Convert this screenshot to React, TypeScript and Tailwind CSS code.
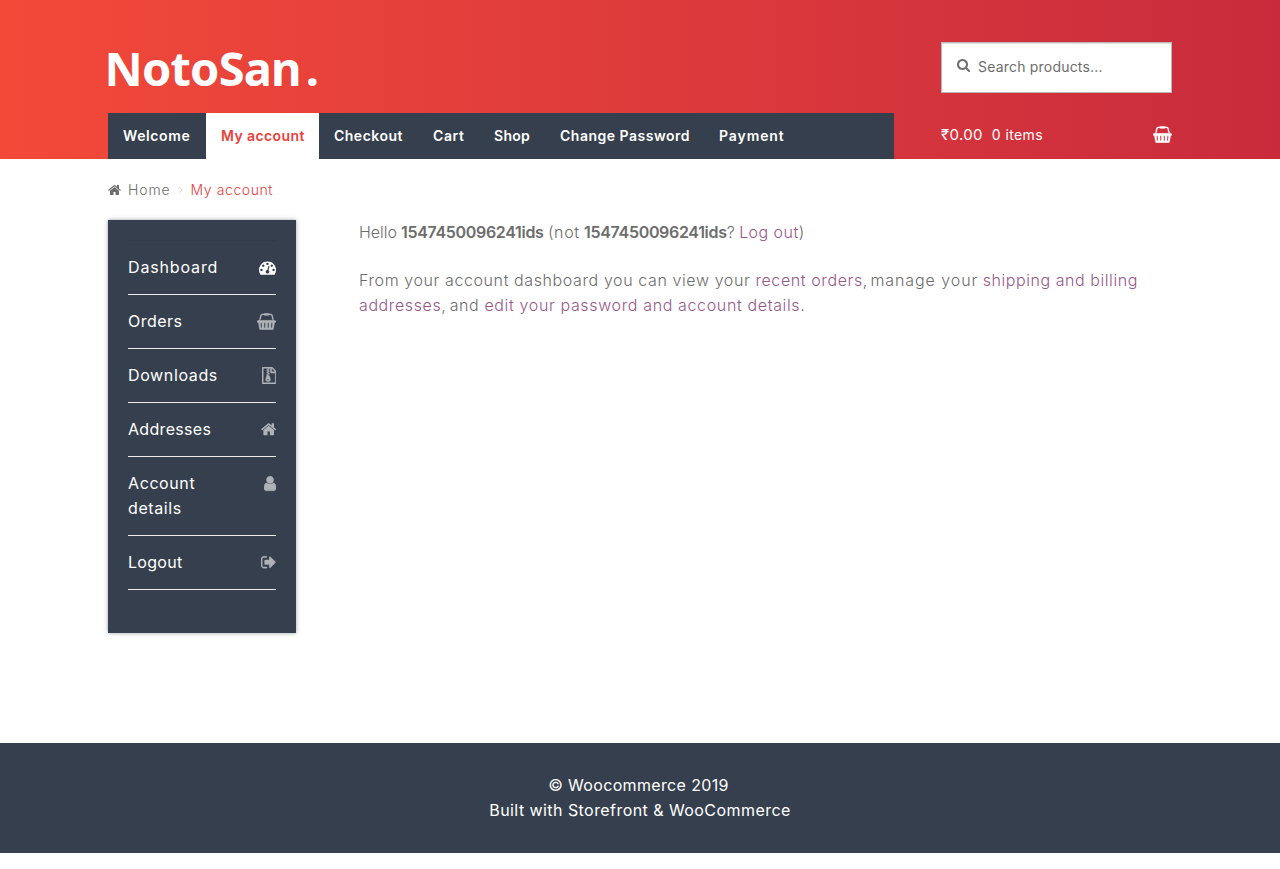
type IconProps = { d: string; viewBox: string; className: string; strokeWidth?: number };

const Icon = ({ d, viewBox, className, strokeWidth = 0 }: IconProps) => (
  <svg
    viewBox={viewBox}
    className={className}
    fill="currentColor"
    stroke="currentColor"
    strokeWidth={strokeWidth}
    aria-hidden="true"
  >
    <path d={d} />
  </svg>
);

const icons = {
  home: {
    viewBox: "64 0 1664 1792",
    d: "M1472 992v480q0 26-19 45t-45 19h-384v-384h-256v384h-384q-26 0-45-19t-19-45v-480q0-1 .5-3t.5-3l575-474 575 474q1 2 1 6zm223-69l-62 74q-8 9-21 11h-3q-13 0-21-7l-692-577-692 577q-12 8-24 7-13-2-21-11l-62-74q-8-10-7-23.5t11-21.5l719-599q32-26 76-26t76 26l244 204v-195q0-14 9-23t23-9h192q14 0 23 9t9 23v408l219 182q10 8 11 21.5t-7 23.5z",
  },
  search: {
    viewBox: "64 0 1664 1792",
    d: "M1216 832q0-185-131.5-316.5t-316.5-131.5-316.5 131.5-131.5 316.5 131.5 316.5 316.5 131.5 316.5-131.5 131.5-316.5zm512 832q0 52-38 90t-90 38q-54 0-90-38l-343-342q-179 124-399 124-143 0-273.5-55.5t-225-150-150-225-55.5-273.5 55.5-273.5 150-225 225-150 273.5-55.5 273.5 55.5 225 150 150 225 55.5 273.5q0 220-124 399l343 343q37 37 37 90z",
  },
  basket: {
    viewBox: "0 0 2048 1792",
    d: "M1920 768q53 0 90.5 37.5t37.5 90.5-37.5 90.5-90.5 37.5h-15l-115 662q-8 46-44 76t-82 30h-1280q-46 0-82-30t-44-76l-115-662h-15q-53 0-90.5-37.5t-37.5-90.5 37.5-90.5 90.5-37.5h1792zm-1435 800q26-2 43.5-22.5t15.5-46.5l-32-416q-2-26-22.5-43.5t-46.5-15.5-43.5 22.5-15.5 46.5l32 416q2 25 20.5 42t43.5 17h5zm411-64v-416q0-26-19-45t-45-19-45 19-19 45v416q0 26 19 45t45 19 45-19 19-45zm384 0v-416q0-26-19-45t-45-19-45 19-19 45v416q0 26 19 45t45 19 45-19 19-45zm352 5l32-416q2-26-15.5-46.5t-43.5-22.5-46.5 15.5-22.5 43.5l-32 416q-2 26 15.5 46.5t43.5 22.5h5q25 0 43.5-17t20.5-42zm-1156-1217l-93 412h-132l101-441q19-88 89-143.5t160-55.5h167q0-26 19-45t45-19h384q26 0 45 19t19 45h167q90 0 160 55.5t89 143.5l101 441h-132l-93-412q-11-44-45.5-72t-79.5-28h-167q0 26-19 45t-45 19h-384q-26 0-45-19t-19-45h-167q-45 0-79.5 28t-45.5 72z",
    strokeWidth: 24,
  },
  gauge: {
    viewBox: "0 0 1792 1792",
    d: "M384 1152q0-53-37.5-90.5t-90.5-37.5-90.5 37.5-37.5 90.5 37.5 90.5 90.5 37.5 90.5-37.5 37.5-90.5zm192-448q0-53-37.5-90.5t-90.5-37.5-90.5 37.5-37.5 90.5 37.5 90.5 90.5 37.5 90.5-37.5 37.5-90.5zm428 481l101-382q6-26-7.5-48.5t-38.5-29.5-48 6.5-30 39.5l-101 382q-60 5-107 43.5t-63 98.5q-20 77 20 146t117 89 146-20 89-117q16-60-6-117t-72-91zm660-33q0-53-37.5-90.5t-90.5-37.5-90.5 37.5-37.5 90.5 37.5 90.5 90.5 37.5 90.5-37.5 37.5-90.5zm-640-640q0-53-37.5-90.5t-90.5-37.5-90.5 37.5-37.5 90.5 37.5 90.5 90.5 37.5 90.5-37.5 37.5-90.5zm448 192q0-53-37.5-90.5t-90.5-37.5-90.5 37.5-37.5 90.5 37.5 90.5 90.5 37.5 90.5-37.5 37.5-90.5zm320 448q0 261-141 483-19 29-54 29h-1402q-35 0-54-29-141-221-141-483 0-182 71-348t191-286 286-191 348-71 348 71 286 191 191 286 71 348z",
  },
  archive: {
    viewBox: "128 0 1536 1792",
    d: "M768 384v-128h-128v128h128zm128 128v-128h-128v128h128zm-128 128v-128h-128v128h128zm128 128v-128h-128v128h128zm700-388q28 28 48 76t20 88v1152q0 40-28 68t-68 28h-1344q-40 0-68-28t-28-68v-1600q0-40 28-68t68-28h896q40 0 88 20t76 48zm-444-244v376h376q-10-29-22-41l-313-313q-12-12-41-22zm384 1528v-1024h-416q-40 0-68-28t-28-68v-416h-128v128h-128v-128h-512v1536h1280zm-627-721l107 349q8 27 8 52 0 83-72.5 137.5t-183.5 54.5-183.5-54.5-72.5-137.5q0-25 8-52 21-63 120-396v-128h128v128h79q22 0 39 13t23 34zm-141 465q53 0 90.5-19t37.5-45-37.5-45-90.5-19-90.5 19-37.5 45 37.5 45 90.5 19z",
    strokeWidth: 50,
  },
  user: {
    viewBox: "256 0 1280 1792",
    d: "M1536 1399q0 109-62.5 187t-150.5 78h-854q-88 0-150.5-78t-62.5-187q0-85 8.5-160.5t31.5-152 58.5-131 94-89 134.5-34.5q131 128 313 128t313-128q76 0 134.5 34.5t94 89 58.5 131 31.5 152 8.5 160.5zm-256-887q0 159-112.5 271.5t-271.5 112.5-271.5-112.5-112.5-271.5 112.5-271.5 271.5-112.5 271.5 112.5 112.5 271.5z",
    strokeWidth: 40,
  },
  signOut: {
    viewBox: "64 0 1664 1792",
    d: "M704 1440q0 4 1 20t.5 26.5-3 23.5-10 19.5-20.5 6.5h-320q-119 0-203.5-84.5t-84.5-203.5v-704q0-119 84.5-203.5t203.5-84.5h320q13 0 22.5 9.5t9.5 22.5q0 4 1 20t.5 26.5-3 23.5-10 19.5-20.5 6.5h-320q-66 0-113 47t-47 113v704q0 66 47 113t113 47h312l11.5 1 11.5 3 8 5.5 7 9 2 13.5zm928-544q0 26-19 45l-544 544q-19 19-45 19t-45-19-19-45v-288h-448q-26 0-45-19t-19-45v-384q0-26 19-45t45-19h448v-288q0-26 19-45t45-19 45 19l544 544q19 19 19 45z",
    strokeWidth: 40,
  },
};

const navItems = [
  { label: "Welcome", width: "w-[98px]", tracking: "tracking-[0.6px]" },
  { label: "My account", width: "w-[113px]", tracking: "tracking-[0.4px]", active: true },
  { label: "Checkout", width: "w-[99px]", tracking: "tracking-[0.49px]" },
  { label: "Cart", width: "w-[61px]", tracking: "tracking-[0.6px]" },
  { label: "Shop", width: "w-[66px]", tracking: "tracking-[0.27px]" },
  { label: "Change Password", width: "w-[159px]", tracking: "tracking-[0.5px]" },
  { label: "Payment", width: "w-[95px]", tracking: "tracking-[0.9px]" },
];

const accountLinks = [
  { label: "Dashboard", tracking: "tracking-[0.85px]", icon: icons.gauge, size: "w-[17px] h-[17px]", active: true },
  { label: "Orders", tracking: "tracking-[0.47px]", icon: icons.basket, size: "w-[19px] h-[17px]" },
  { label: "Downloads", tracking: "tracking-[0.63px]", icon: icons.archive, size: "w-[14.5px] h-[17px]" },
  { label: "Addresses", tracking: "tracking-[0.32px]", icon: icons.home, size: "w-[15.4px] h-[16.5px]" },
  { label: "Account details", tracking: "tracking-[0.6px]", icon: icons.user, size: "w-[12.1px] h-[17px]" },
  { label: "Logout", tracking: "tracking-[0.3px]", icon: icons.signOut, size: "w-[15.4px] h-[16.5px]" },
];

function Header() {
  return (
    <header className="h-[159px] bg-linear-to-r from-[#f24939] to-[#c92b3c]">
      <div className="mx-auto flex h-full w-[1064px] justify-between">
        <div className="flex w-[786px] flex-col justify-between">
          <a className="mt-9 -ml-[3.5px] flex font-['Noto_Sans',sans-serif] text-[47px] leading-[65px] font-bold text-white">
            <span className="tracking-[-0.8px]">NotoSan</span>
            <span className="ml-[5px]">.</span>
          </a>
          <nav className="flex h-[46px] bg-[#363f4d] text-sm font-semibold text-white">
            {navItems.map((item) => (
              <a
                key={item.label}
                className={`flex items-center pl-[15px] whitespace-nowrap ${item.width} ${item.tracking} ${item.active ? "bg-white text-[#e8413b]" : ""}`}
              >
                {item.label}
              </a>
            ))}
          </nav>
        </div>
        <div className="flex w-[231px] flex-col pt-[42px] text-white">
          <div className="flex h-[51px] items-center border border-[#b9b9b9] bg-white pb-0.5 pl-[15px] text-sm text-[#6d6d6d] shadow-[inset_0_1px_1px_rgba(0,0,0,0.125)]">
            <Icon {...icons.search} className="mb-1 h-[14px] w-[13px]" />
            <span className="ml-2 tracking-[0.2px]">Search products...</span>
          </div>
          <div className="mt-[30px] flex h-6 items-center">
            <span className="text-[15px] tracking-[0.35px]">₹0.00</span>
            <span className="ml-[9px] text-sm tracking-[0.4px]">0 items</span>
            <Icon {...icons.basket} className="mb-0.5 ml-auto h-[17px] w-[19px]" />
          </div>
        </div>
      </div>
    </header>
  );
}

function Sidebar() {
  return (
    <aside className="h-[413px] w-[188px] bg-[#363f4d] px-5 pt-5 shadow-[0_0_4px_rgba(54,63,77,0.5)]">
      <ul className="border-t border-black/5 text-white">
        {accountLinks.map((link) => (
          <li key={link.label} className="flex items-start justify-between border-b border-[#ececec] py-[14px] leading-[25px]">
            <span className={`w-[100px] ${link.tracking}`}>{link.label}</span>
            <Icon {...link.icon} className={`mt-1 ${link.size} ${link.active ? "" : "opacity-60"}`} />
          </li>
        ))}
      </ul>
    </aside>
  );
}

function Content() {
  return (
    <main className="w-[813px] text-base leading-[25px] font-light text-[#6d6d6d]">
      <p className="whitespace-nowrap">
        <span className="[word-spacing:-0.6px]">Hello </span>
        <strong className="font-semibold tracking-[-0.32px]">1547450096241ids</strong>
        <span className="tracking-[0.65px] [word-spacing:-0.8px]"> (not </span>
        <strong className="font-semibold tracking-[-0.32px]">1547450096241ids</strong>
        <span>
          ? <a className="tracking-[0.45px] text-[#96588a]">Log out</a>)
        </span>
      </p>
      <p className="mt-[23px] tracking-[0.6px] whitespace-nowrap">
        From your account dashboard you can view your <a className="text-[#96588a]">recent orders</a>
        <span className="tracking-[-0.7px]">, </span>
        <span className="tracking-[0.93px]">manage your</span>
        <span className="tracking-normal"> </span>
        <a className="tracking-[0.56px] text-[#96588a]">shipping and billing</a>
        <br />
        <a className="text-[#96588a]">addresses</a>
        <span className="tracking-[-0.3px]">, </span>and{" "}
        <a className="tracking-[0.64px] text-[#96588a]">edit your password and account details</a>.
      </p>
    </main>
  );
}

export default function App() {
  return (
    <div className="h-[869px] overflow-hidden bg-white font-['Inter',sans-serif]">
      <Header />
      <div className="mx-auto w-[1064px]">
        <div className="flex h-[61px] items-center text-sm font-light text-[#6d6d6d]">
          <Icon {...icons.home} className="h-[14px] w-[13px]" />
          <span className="ml-[7px] tracking-[0.9px]">Home</span>
          <svg viewBox="0 0 5 8" className="ml-[7px] h-2 w-[5px]" fill="none" stroke="#fad4d3">
            <path d="M1 1l3 3-3 3" />
          </svg>
          <span className="ml-2 tracking-[0.58px] text-[#e2403b]">My account</span>
        </div>
        <div className="flex h-[523px] items-start justify-between">
          <Sidebar />
          <Content />
        </div>
      </div>
      <footer className="flex h-[110px] flex-col items-center justify-center bg-[#363f4d] text-base leading-[25px] text-white">
        <div className="-ml-[3px] tracking-[0.35px]">© Woocommerce 2019</div>
        <div className="tracking-[0.44px]">Built with Storefront &amp; WooCommerce</div>
      </footer>
    </div>
  );
}
